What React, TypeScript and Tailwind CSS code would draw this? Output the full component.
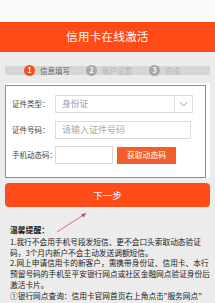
import React from "react";

const font = { fontFamily: '"Noto Sans CJK SC", "Noto Sans", sans-serif' };

function Step({ n, label, active }: { n: string; label: string; active?: boolean }) {
  return (
    <div className="flex items-center gap-[5px]">
      <div
        className={`w-[11px] h-[11px] rounded-full flex items-center justify-center text-white text-[7px] font-bold leading-none ${
          active ? "bg-[#f3501f]" : "bg-[#a8a8a8]"
        }`}
      >
        {n}
      </div>
      <span className={`text-[7.5px] leading-none ${active ? "text-[#666]" : "text-[#b5b5b5]"}`}>{label}</span>
    </div>
  );
}

export default function App() {
  return (
    <div className="w-[215px] h-[303px] overflow-hidden bg-[#ececec] relative" style={font}>
      <div className="h-[22px] bg-[#f9f9f9]" />
      <div className="h-[30px] bg-[#fe4b17] flex items-center justify-center text-white text-[11.5px] tracking-[0.3px]">
        信用卡在线激活
      </div>
      <div className="pt-[14px] px-[5px]">
        <div className="h-[9px] bg-[#d6d6d6] flex items-center pl-[19px]">
          <div className="w-[62px]">
            <Step n="1" label="信息填写" active />
          </div>
          <div className="w-[63px]">
            <Step n="2" label="账户设置" />
          </div>
          <Step n="3" label="完成" />
        </div>
      </div>
      <div className="mx-[5px] mt-[8px] bg-white relative pt-[12px] pb-[14px] pl-[7px]">
        <div className="absolute left-0 top-[2px] w-[201px] h-[93px] border border-[#d9706a] pointer-events-none" />
        <div className="flex items-center">
          <span className="w-[43px] text-[7.5px] text-[#444]">证件类型：</span>
          <div className="w-[138px] h-[18px] border border-[#dcdcdc] flex items-center">
            <span className="flex-1 pl-[6px] text-[8.7px] text-[#999]">身份证</span>
            <div className="w-[18px] h-full border-l border-[#dcdcdc] flex items-center justify-center">
              <svg width="9" height="6" viewBox="0 0 9 6">
                <path d="M0.5 0.8 L4.5 5 L8.5 0.8" fill="none" stroke="#999" strokeWidth="0.9" />
              </svg>
            </div>
          </div>
        </div>
        <div className="flex items-center mt-[8px]">
          <span className="w-[43px] text-[7.5px] text-[#444]">证件号码：</span>
          <div className="w-[136px] h-[18px] border border-[#dcdcdc] flex items-center">
            <span className="pl-[6px] text-[9px] text-[#aaa]">请输入证件号码</span>
          </div>
        </div>
        <div className="flex items-center mt-[7px]">
          <span className="w-[43px] text-[7.5px] text-[#444] whitespace-nowrap">手机动态码：</span>
          <div className="w-[58px] h-[18px] border border-[#dcdcdc]" />
          <div className="ml-[4px] w-[59px] h-[17px] bg-[#f35d2c] flex items-center justify-center text-white text-[7.8px]">
            获取动态码
          </div>
        </div>
      </div>
      <div className="mx-[5px] mt-[5px] h-[24px] rounded-[4px] bg-[#fe4b17] flex items-center justify-center text-white text-[9.5px]">
        下一步
      </div>
      <svg className="absolute left-0 top-0" width="215" height="303" viewBox="0 0 215 303">
        <line x1="57" y1="232" x2="85" y2="214" stroke="#d84a4a" strokeWidth="0.8" />
        <path d="M86.5 213 L81 214.2 L83.5 217.5 Z" fill="#d84a4a" />
      </svg>
      <div className="pl-[10px] pt-[18px] text-[7.7px] leading-[10.8px] text-[#222] whitespace-nowrap">
        <div className="font-bold text-[7.8px] mb-[1px]">温馨提醒：</div>
        <div>1.我行不会用手机号段发短信、更不会口头索取动态验证</div>
        <div>码，3个月内新户不会主动发送调额短信。</div>
        <div>2.网上申请信用卡的新客户，需携带身份证、信用卡、本行</div>
        <div>预留号码的手机至平安银行网点或社区金融网点验证身份后</div>
        <div>激活卡片。</div>
        <div>①银行网点查询：信用卡官网首页右上角点击"服务网点"</div>
        <div>②社区金融网点查询，请点击这里</div>
      </div>
    </div>
  );
}
